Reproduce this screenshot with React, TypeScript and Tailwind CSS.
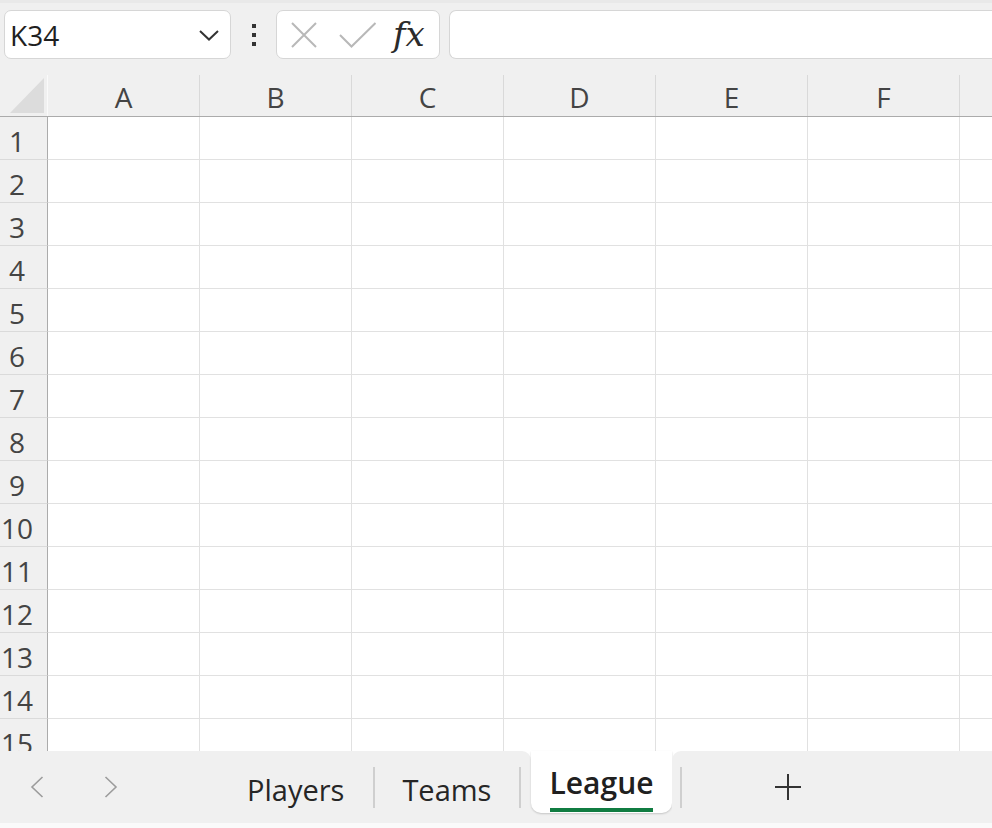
import React from 'react';

const FONT = { fontFamily: '"Open Sans", "Noto Sans", Arial, sans-serif' };
const cols = ['A', 'B', 'C', 'D', 'E', 'F', 'G'];
const rows = Array.from({ length: 15 }, (_, i) => i + 1);

function Toolbar() {
  return (
    <div className="h-[75px] bg-[#f0f0f0] relative">
      <div className="h-[3px] bg-[#e9e9e9]" />
      <div className="flex items-start pt-[7px] pl-[4px]">
        {/* Name box */}
        <div className="w-[227px] h-[49px] bg-white border border-[#d6d6d6] rounded-[7px] flex items-center justify-between pl-[5px] pr-[10px]">
          <span className="text-[28px] leading-none text-[#1f1f1f]">K34</span>
          <svg width="22" height="14" viewBox="0 0 22 14">
            <path d="M2 3 L11 11.5 L20 3" fill="none" stroke="#333" strokeWidth="2" />
          </svg>
        </div>

        {/* more dots */}
        <div className="w-[45px] h-[49px] flex flex-col items-center justify-center gap-[5px]">
          <div className="w-[4px] h-[4px] bg-[#333]" />
          <div className="w-[4px] h-[4px] bg-[#333]" />
          <div className="w-[4px] h-[4px] bg-[#333]" />
        </div>

        {/* cancel / enter / fx */}
        <div className="w-[164px] h-[49px] bg-white border border-[#d6d6d6] rounded-[7px] flex items-center pl-[13px]">
          <svg width="28" height="28" viewBox="0 0 28 28">
            <path d="M2 2 L26 26 M26 2 L2 26" stroke="#b8b8b8" strokeWidth="2" fill="none" />
          </svg>
          <svg width="38" height="28" viewBox="0 0 38 28" className="ml-[21px]">
            <path d="M1 14 L12.5 25.5 L36.5 2" stroke="#b8b8b8" strokeWidth="2" fill="none" />
          </svg>
          <span
            className="ml-[16px] text-[34px] leading-none italic text-[#2b2b2b] -mt-[2px]"
            style={{ fontFamily: '"DejaVu Serif", "Liberation Serif", serif' }}
          >
            fx
          </span>
        </div>

        {/* formula input */}
        <div className="ml-[9px] flex-1 h-[49px] bg-white border border-r-0 border-[#d6d6d6] rounded-l-[7px]" />
      </div>
    </div>
  );
}

function Grid() {
  return (
    <div className="h-[676px] overflow-hidden bg-white">
      {/* column header */}
      <div className="flex h-[42px] bg-[#f0f0f0] border-b border-[#ababab]">
        <div className="w-[48px] shrink-0 border-r border-[#fafafa] relative">
          <svg width="48" height="42" viewBox="0 0 48 42" className="absolute left-0 top-0">
            <path d="M44 3 L44 38 L10 38 Z" fill="#dcdcdc" />
          </svg>
        </div>
        {cols.map((c) => (
          <div
            key={c}
            className="w-[152px] shrink-0 border-r border-[#d9d9d9] flex items-center justify-center text-[28px] leading-none text-[#444] pt-[2px]"
          >
            {c === 'G' ? '' : c}
          </div>
        ))}
      </div>

      {rows.map((r) => (
        <div key={r} className="flex h-[43px]">
          <div className="w-[48px] shrink-0 bg-[#f0f0f0] border-r border-b border-r-[#ababab] border-b-[#dadada] flex items-start justify-center pr-[13px] text-[28px] leading-none text-[#444] pt-[10px]">
            {r}
          </div>
          {cols.map((c) => (
            <div key={c} className="w-[152px] shrink-0 border-r border-b border-[#e1e1e1]" />
          ))}
        </div>
      ))}
    </div>
  );
}

function Separator() {
  return <div className="w-[2px] h-[41px] bg-[#cfcfcf] shrink-0" />;
}

function SheetTabs() {
  return (
    <div className="h-[72px] flex bg-white">
      <div className="w-[531px] shrink-0 bg-[#f0f0f0] rounded-tr-[9px] flex items-center">
        <svg width="14" height="22" viewBox="0 0 14 22" className="ml-[30px] shrink-0">
          <path d="M12.5 1 L2 11 L12.5 21" fill="none" stroke="#9c9c9c" strokeWidth="1.6" />
        </svg>
        <svg width="14" height="22" viewBox="0 0 14 22" className="ml-[60px] shrink-0">
          <path d="M1.5 1 L12 11 L1.5 21" fill="none" stroke="#9c9c9c" strokeWidth="1.6" />
        </svg>
        <span className="ml-[129px] text-[29px] leading-none text-[#262626] pt-[4px]">Players</span>
        <div className="ml-[29px]">
          <Separator />
        </div>
        <span className="ml-[27px] text-[29px] leading-none text-[#262626] pt-[4px]">Teams</span>
        <div className="ml-[28px]">
          <Separator />
        </div>
      </div>

      <div className="w-[141px] shrink-0 bg-[#f0f0f0]">
        <div className="h-[62px] bg-white rounded-b-[10px] shadow-[0_1px_2px_rgba(0,0,0,0.18)] flex flex-col items-center pt-[17px]">
          <span className="text-[30px] leading-none font-semibold text-[#202020]">League</span>
          <div className="mt-[10px] w-[103px] h-[4px] bg-[#107c41]" />
        </div>
      </div>

      <div className="flex-1 bg-[#f0f0f0] rounded-tl-[9px] flex items-center">
        <div className="ml-[8px]">
          <Separator />
        </div>
        <svg width="26" height="26" viewBox="0 0 26 26" className="ml-[93px] shrink-0">
          <path d="M13 0 L13 26 M0 13 L26 13" stroke="#333" strokeWidth="2" fill="none" />
        </svg>
      </div>
    </div>
  );
}

export default function App() {
  return (
    <div className="w-[992px] h-[828px] overflow-hidden bg-[#f0f0f0]" style={FONT}>
      <Toolbar />
      <Grid />
      <SheetTabs />
      <div className="h-[5px] bg-[#fafafa]" />
    </div>
  );
}
